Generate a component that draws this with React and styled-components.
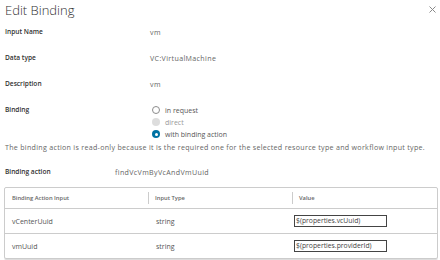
import React from 'react'
import styled, { createGlobalStyle } from 'styled-components'

const GlobalStyle = createGlobalStyle`
  html, body {
    margin: 0;
    padding: 0;
    background: #fff;
  }
  body {
    font-family: "Open Sans", "Noto Sans", sans-serif;
    color: #565656;
  }
`

const Modal = styled.div`
  width: 440px;
  height: 260px;
  box-sizing: border-box;
  padding: 0 4px 0 5px;
  overflow: hidden;
`

const Header = styled.div`
  display: flex;
  justify-content: space-between;
  align-items: center;
  height: 19px;
`

const Title = styled.h3`
  margin: 0;
  font-size: 13px;
  font-weight: 300;
  color: #313131;
`

const Close = styled.button`
  border: 0;
  background: none;
  padding: 0;
  margin-right: -1px;
  width: 9px;
  height: 9px;
  display: flex;
  align-items: center;
  justify-content: center;
`

const Row = styled.div`
  display: grid;
  grid-template-columns: ${p => p.labelWidth || 145}px 1fr;
  align-items: ${p => p.top ? 'start' : 'center'};
  height: ${p => p.h || 26}px;
  margin-top: ${p => p.gap || 0}px;
`

const Label = styled.div`
  font-size: 6.6px;
  font-weight: 600;
  color: #313131;
  line-height: 12px;
`

const Value = styled.div`
  font-size: 7.1px;
  letter-spacing: 0.35px;
  color: #666;
  line-height: 12px;
`

const RadioGroup = styled.div`
  display: flex;
  flex-direction: column;
`

const RadioItem = styled.label`
  display: flex;
  align-items: center;
  gap: 5px;
  height: 12px;
  font-size: 7px;
  color: ${p => p.disabled ? '#999' : '#565656'};
`

const Dot = styled.span`
  box-sizing: border-box;
  width: 8px;
  height: 8px;
  margin-left: 2px;
  border-radius: 50%;
  border: ${p => p.state === 'off' ? '1px solid #8c8c8c' : '0'};
  background: ${p => p.state === 'on' ? '#0072a3' : p.state === 'disabled' ? '#ddd' : '#fff'};
  display: flex;
  align-items: center;
  justify-content: center;
  &::after {
    content: "";
    display: ${p => p.state === 'on' ? 'block' : 'none'};
    width: 3px;
    height: 3px;
    border-radius: 50%;
    background: #fff;
  }
`

const Note = styled.p`
  margin: 0;
  height: 13px;
  line-height: 13px;
  font-size: 7.1px;
  letter-spacing: 0.29px;
  color: #666;
  white-space: nowrap;
`

const Table = styled.div`
  margin: 5px 0 0 -1px;
  width: 432px;
  border: 1px solid #ccc;
  border-radius: 2px;
  box-shadow: 0 1px 0 #ddd;
`

const TRow = styled.div`
  display: grid;
  grid-template-columns: 144px 144px 1fr;
  height: ${p => p.head ? 20 : 24}px;
  border-top: ${p => p.head ? '0' : '1px solid #ccc'};
`

const HCell = styled.div`
  display: flex;
  align-items: center;
  padding-left: ${p => p.first ? 7 : 6}px;
  font-size: 5.8px;
  font-weight: 600;
  color: #666;
  position: relative;
  &::before {
    content: "";
    display: ${p => p.first ? 'none' : 'block'};
    position: absolute;
    left: -1px;
    top: 4px;
    bottom: 4px;
    width: 1px;
    background: #ccc;
  }
`

const Cell = styled.div`
  display: flex;
  align-items: center;
  padding-left: ${p => p.flush ? 1 : 7}px;
  font-size: 7px;
  color: #565656;
`

const Field = styled.div`
  box-sizing: border-box;
  width: 93px;
  height: 12px;
  border: 1px solid #444;
  padding-left: 1px;
  font-size: 6.8px;
  line-height: 10px;
  color: #444;
  white-space: nowrap;
  overflow: hidden;
`

const inputs = [
  { name: 'vCenterUuid', type: 'string', value: '$(properties.vcUuid)' },
  { name: 'vmUuid', type: 'string', value: '$(properties.providerId)' },
]

export default function App() {
  return (
    <>
      <GlobalStyle />
      <Modal>
        <Header>
          <Title>Edit Binding</Title>
          <Close aria-label="close">
            <svg width="7" height="7" viewBox="0 0 7 7">
              <path d="M0.5 0.5L6.5 6.5M6.5 0.5L0.5 6.5" stroke="#8a8a8a" strokeWidth="1" />
            </svg>
          </Close>
        </Header>

        <Row><Label>Input Name</Label><Value>vm</Value></Row>
        <Row><Label>Data type</Label><Value>VC:VirtualMachine</Value></Row>
        <Row h={25}><Label>Description</Label><Value>vm</Value></Row>

        <Row top h={37} gap={8}>
          <Label>Binding</Label>
          <RadioGroup>
            <RadioItem><Dot state="off" />in request</RadioItem>
            <RadioItem disabled><Dot state="disabled" />direct</RadioItem>
            <RadioItem><Dot state="on" />with binding action</RadioItem>
          </RadioGroup>
        </Row>

        <Note>The binding action is read-only because it is the required one for the selected resource type and workflow input type.</Note>

        <Row labelWidth={110} h={20} gap={8}>
          <Label>Binding action</Label>
          <Value>findVcVmByVcAndVmUuid</Value>
        </Row>

        <Table>
          <TRow head>
            <HCell first>Binding Action Input</HCell>
            <HCell>Input Type</HCell>
            <HCell>Value</HCell>
          </TRow>
          {inputs.map(r => (
            <TRow key={r.name}>
              <Cell>{r.name}</Cell>
              <Cell>{r.type}</Cell>
              <Cell flush><Field>{r.value}</Field></Cell>
            </TRow>
          ))}
        </Table>
      </Modal>
    </>
  )
}
